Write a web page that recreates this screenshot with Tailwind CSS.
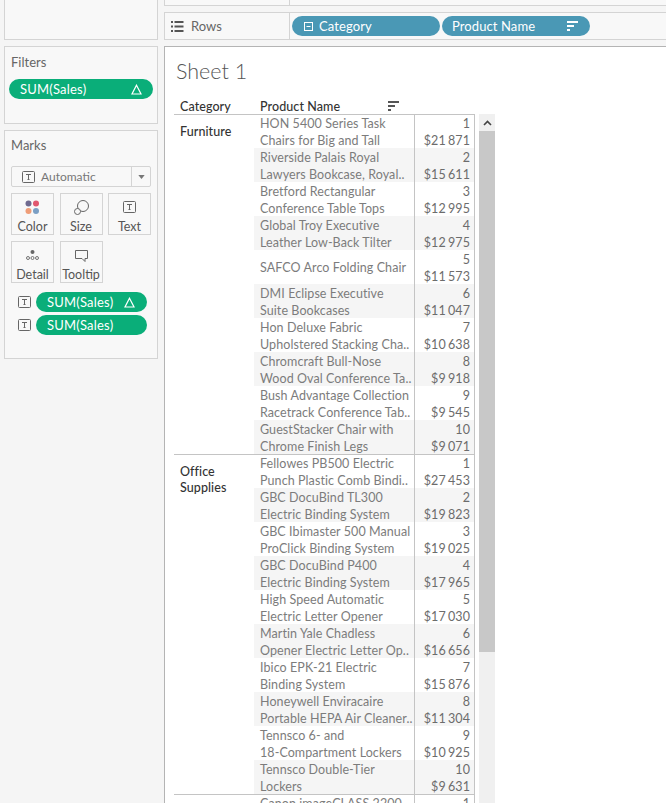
<!DOCTYPE html>
<html>
<head>
<meta charset="utf-8">
<script src="https://cdn.jsdelivr.net/npm/@tailwindcss/browser@4"></script>
</head>
<body class="bg-white">
<div class="flex h-[803px] w-[666px] overflow-hidden bg-white font-['Lato','Liberation_Sans',sans-serif] text-[12px] text-[#555]">
  <!-- Sidebar -->
  <aside class="flex h-full w-[164px] shrink-0 flex-col bg-[#f5f5f5] pl-[4px]">
    <div class="h-[40px] w-[154px] border border-t-0 border-[#d4d4d4] bg-[#f8f8f8]"></div>
    <section class="mt-[6px] h-[78px] w-[154px] border border-[#d4d4d4] bg-[#f8f8f8] px-[4px]">
      <h2 class="pl-[2px] pt-[7px] text-[13px] leading-[17px] text-[#666]">Filters</h2>
      <div class="mt-[8px] flex h-[20px] items-center justify-between rounded-full bg-[#0aae79] pl-[11px] pr-[11px] text-[13px] tracking-[.2px] text-white">
        <span class="pt-px">SUM(Sales)</span>
        <svg width="11" height="11" viewBox="0 0 11 11" fill="none" stroke="#fff" stroke-width="1.2"><path d="M5.5 1.2 10 10H1Z"/></svg>
      </div>
    </section>
    <section class="mt-[6px] h-[229px] w-[154px] border border-[#d4d4d4] bg-[#f8f8f8] pl-[6px]">
      <h2 class="pt-[6px] text-[13px] leading-[17px] text-[#666]">Marks</h2>
      <div class="mt-[12px] flex h-[21px] w-[140px] items-center rounded-[2px] border border-[#d4d4d4] bg-[#f8f8f8]">
        <div class="flex flex-1 items-center pl-[10px]">
          <svg width="13" height="12" viewBox="0 0 13 12" fill="none"><rect x=".5" y=".5" width="12" height="11" rx="1" stroke="#666"/><path d="M4 3.5h5M6.5 3.5v5M5.5 8.5h2" stroke="#666"/></svg>
          <span class="ml-[6px] text-[12px] text-[#777]">Automatic</span>
        </div>
        <div class="flex h-full w-[19px] items-center justify-center border-l border-[#d4d4d4]">
          <svg width="7" height="4" viewBox="0 0 8 5"><path d="M0 0h8L4 5Z" fill="#777"/></svg>
        </div>
      </div>
      <div class="mt-[6px] grid w-[140px] grid-cols-[43px_43px_43px] gap-x-[5.5px] gap-y-[6px] text-[12.5px]">
        <div class="flex h-[42px] flex-col items-center border border-[#d4d4d4]">
          <svg class="mt-[6px]" width="15" height="15" viewBox="0 0 15 15"><circle cx="3.5" cy="3.5" r="3" fill="#6f6a8f"/><circle cx="11" cy="3.5" r="3" fill="#e0576f"/><circle cx="3.5" cy="11" r="3" fill="#ef9d78"/><circle cx="11" cy="11" r="3" fill="#7b9fc4"/></svg>
          <span class="mt-[4px] leading-[15px]">Color</span>
        </div>
        <div class="flex h-[42px] flex-col items-center border border-[#d4d4d4]">
          <svg class="mt-[6px]" width="15" height="15" viewBox="0 0 15 15" fill="none" stroke="#666"><circle cx="9" cy="6" r="5.5"/><circle cx="3.5" cy="11.5" r="3" fill="#f8f8f8"/></svg>
          <span class="mt-[4px] leading-[15px]">Size</span>
        </div>
        <div class="flex h-[42px] flex-col items-center border border-[#d4d4d4]">
          <svg class="mt-[7px]" width="13" height="12" viewBox="0 0 13 12" fill="none"><rect x=".5" y=".5" width="12" height="11" rx="1" stroke="#666"/><path d="M4 3.5h5M6.5 3.5v5M5.5 8.5h2" stroke="#666"/></svg>
          <span class="mt-[6px] leading-[15px]">Text</span>
        </div>
        <div class="flex h-[42px] flex-col items-center border border-[#d4d4d4]">
          <svg class="mt-[8px]" width="13" height="10" viewBox="0 0 13 10" fill="none" stroke="#666" stroke-width=".9"><circle cx="6.5" cy="2" r="2" fill="#666" stroke="none"/><circle cx="2" cy="8" r="1.5"/><circle cx="6.5" cy="8" r="1.5"/><circle cx="11" cy="8" r="1.5"/></svg>
          <span class="mt-[7px] leading-[15px]">Detail</span>
        </div>
        <div class="flex h-[42px] flex-col items-center border border-[#d4d4d4]">
          <svg class="mt-[7px]" width="14" height="14" viewBox="0 0 14 14" fill="none" stroke="#666"><path d="M1.5 1.5h12v8H11v3l-3-3H1.5Z"/></svg>
          <span class="mt-[4px] whitespace-nowrap leading-[15px]">Tooltip</span>
        </div>
      </div>
      <div class="mt-[9px] flex h-[20px] w-[140px] items-center">
        <svg class="ml-[7px]" width="13" height="12" viewBox="0 0 13 12" fill="none"><rect x=".5" y=".5" width="12" height="11" rx="1" stroke="#666"/><path d="M4 3.5h5M6.5 3.5v5M5.5 8.5h2" stroke="#666"/></svg>
        <div class="ml-[5px] flex h-[20px] w-[111px] items-center justify-between rounded-full bg-[#0aae79] pl-[11px] pr-[12px] text-[13px] tracking-[.2px] text-white">
          <span class="pt-px">SUM(Sales)</span>
          <svg width="11" height="11" viewBox="0 0 11 11" fill="none" stroke="#fff" stroke-width="1.2"><path d="M5.5 1.2 10 10H1Z"/></svg>
        </div>
      </div>
      <div class="mt-[3px] flex h-[20px] w-[140px] items-center">
        <svg class="ml-[7px]" width="13" height="12" viewBox="0 0 13 12" fill="none"><rect x=".5" y=".5" width="12" height="11" rx="1" stroke="#666"/><path d="M4 3.5h5M6.5 3.5v5M5.5 8.5h2" stroke="#666"/></svg>
        <div class="ml-[5px] flex h-[20px] w-[111px] items-center rounded-full bg-[#0aae79] pl-[11px] text-[13px] tracking-[.2px] text-white"><span class="pt-px">SUM(Sales)</span></div>
      </div>
    </section>
  </aside>

  <!-- Main -->
  <main class="flex h-full min-w-0 flex-1 flex-col bg-[#f5f5f5]">
    <div class="flex h-[6px] border-b border-l border-[#d4d4d4] bg-[#f8f8f8]">
      <div class="w-[125px] border-r border-[#d4d4d4]"></div>
    </div>
    <div class="mt-[6px] flex h-[28px] items-center border-y border-l border-[#d4d4d4] bg-[#f8f8f8]">
      <div class="flex h-full w-[125px] items-center border-r border-[#d4d4d4] pl-[6px]">
        <svg width="13" height="11" viewBox="0 0 13 11" fill="#555"><rect width="2" height="2"/><rect y="4.5" width="2" height="2"/><rect y="9" width="2" height="2"/><rect x="3.5" width="9" height="2"/><rect x="3.5" y="4.5" width="9" height="2"/><rect x="3.5" y="9" width="9" height="2"/></svg>
        <span class="ml-[7px] pt-px text-[13px] text-[#666]">Rows</span>
      </div>
      <div class="ml-[2px] flex h-[20px] w-[148px] items-center rounded-full bg-[#4a98b5] pl-[12px] text-[13px] tracking-[.1px] text-white">
        <svg width="9" height="9" viewBox="0 0 9 9" fill="none" stroke="#fff"><rect x=".5" y=".5" width="8" height="8"/><path d="M2.5 4.5h4"/></svg>
        <span class="ml-[6px] pt-px">Category</span>
      </div>
      <div class="ml-[2px] flex h-[20px] w-[148px] items-center justify-between rounded-full bg-[#4a98b5] pl-[10px] pr-[12px] text-[13px] tracking-[.1px] text-white">
        <span class="pt-px">Product Name</span>
        <svg width="11" height="10" viewBox="0 0 11 10" fill="#fff"><rect width="11" height="2"/><rect y="4" width="7" height="2"/><rect y="8" width="3" height="2"/></svg>
      </div>
    </div>
    <div class="mt-[6px] flex min-h-0 flex-1 flex-col overflow-hidden border-t border-l border-[#b4b4b4] bg-white pl-[9px] text-[12.5px] tracking-[.08px]">
      <h1 class="flex h-[50px] shrink-0 items-center pb-px pl-[2px] text-[21.5px] font-light tracking-normal text-[#555]">Sheet 1</h1>
      <div class="flex">
        <div class="w-[301px] shrink-0">
          <div class="flex h-[17px] items-center font-medium leading-[17px] text-[#333]">
            <div class="w-[80px] pl-[6px] pt-[2px]">Category</div>
            <div class="flex w-[161px] items-center pl-[6px]"><span class="pt-[2px]">Product Name</span>
              <svg class="ml-[48px]" width="11" height="10" viewBox="0 0 11 10" fill="#555"><rect width="11" height="2"/><rect y="4" width="7" height="2"/><rect y="8" width="3" height="2"/></svg>
            </div>
          </div>

          <div class="flex border-t border-[#c4c4c4]">
            <div class="w-[80px] shrink-0 pl-[6px] pt-[9px] font-medium leading-[16px] text-[#333]">Furniture</div>
            <div class="-mt-px w-[221px] shrink-0 leading-[17px] text-[#7c7c7c] [&>div>div]:pt-px [&>div>div:last-child]:pr-[4px] [&>div>div:last-child]:[word-spacing:-1px]">
              <div class="flex h-[34px]"><div class="w-[161px] overflow-hidden whitespace-nowrap border-r border-[#c4c4c4] pl-[6px]">HON 5400 Series Task<br>Chairs for Big and Tall</div><div class="w-[60px] border-r border-[#c4c4c4] text-right text-[#6c6c6c]">1<br>$21&nbsp;871</div></div>
              <div class="flex h-[34px] bg-[#f5f5f5]"><div class="w-[161px] overflow-hidden whitespace-nowrap border-r border-[#c4c4c4] pl-[6px]">Riverside Palais Royal<br>Lawyers Bookcase, Royal..</div><div class="w-[60px] border-r border-[#c4c4c4] text-right text-[#6c6c6c]">2<br>$15&nbsp;611</div></div>
              <div class="flex h-[34px]"><div class="w-[161px] overflow-hidden whitespace-nowrap border-r border-[#c4c4c4] pl-[6px]">Bretford Rectangular<br>Conference Table Tops</div><div class="w-[60px] border-r border-[#c4c4c4] text-right text-[#6c6c6c]">3<br>$12&nbsp;995</div></div>
              <div class="flex h-[34px] bg-[#f5f5f5]"><div class="w-[161px] overflow-hidden whitespace-nowrap border-r border-[#c4c4c4] pl-[6px]">Global Troy Executive<br>Leather Low-Back Tilter</div><div class="w-[60px] border-r border-[#c4c4c4] text-right text-[#6c6c6c]">4<br>$12&nbsp;975</div></div>
              <div class="flex h-[34px]"><div class="flex w-[161px] items-center overflow-hidden whitespace-nowrap border-r border-[#c4c4c4] pl-[6px]">SAFCO Arco Folding Chair</div><div class="w-[60px] border-r border-[#c4c4c4] text-right text-[#6c6c6c]">5<br>$11&nbsp;573</div></div>
              <div class="flex h-[34px] bg-[#f5f5f5]"><div class="w-[161px] overflow-hidden whitespace-nowrap border-r border-[#c4c4c4] pl-[6px]">DMI Eclipse Executive<br>Suite Bookcases</div><div class="w-[60px] border-r border-[#c4c4c4] text-right text-[#6c6c6c]">6<br>$11&nbsp;047</div></div>
              <div class="flex h-[34px]"><div class="w-[161px] overflow-hidden whitespace-nowrap border-r border-[#c4c4c4] pl-[6px]">Hon Deluxe Fabric<br>Upholstered Stacking Cha..</div><div class="w-[60px] border-r border-[#c4c4c4] text-right text-[#6c6c6c]">7<br>$10&nbsp;638</div></div>
              <div class="flex h-[34px] bg-[#f5f5f5]"><div class="w-[161px] overflow-hidden whitespace-nowrap border-r border-[#c4c4c4] pl-[6px]">Chromcraft Bull-Nose<br>Wood Oval Conference Ta..</div><div class="w-[60px] border-r border-[#c4c4c4] text-right text-[#6c6c6c]">8<br>$9&nbsp;918</div></div>
              <div class="flex h-[34px]"><div class="w-[161px] overflow-hidden whitespace-nowrap border-r border-[#c4c4c4] pl-[6px]">Bush Advantage Collection<br>Racetrack Conference Tab..</div><div class="w-[60px] border-r border-[#c4c4c4] text-right text-[#6c6c6c]">9<br>$9&nbsp;545</div></div>
              <div class="flex h-[34px] bg-[#f5f5f5]"><div class="w-[161px] overflow-hidden whitespace-nowrap border-r border-[#c4c4c4] pl-[6px]">GuestStacker Chair with<br>Chrome Finish Legs</div><div class="w-[60px] border-r border-[#c4c4c4] text-right text-[#6c6c6c]">10<br>$9&nbsp;071</div></div>
            </div>
          </div>

          <div class="flex border-t border-[#c4c4c4]">
            <div class="w-[80px] shrink-0 pl-[6px] pt-[9px] font-medium leading-[16px] text-[#333]">Office<br>Supplies</div>
            <div class="-mt-px w-[221px] shrink-0 leading-[17px] text-[#7c7c7c] [&>div>div]:pt-px [&>div>div:last-child]:pr-[4px] [&>div>div:last-child]:[word-spacing:-1px]">
              <div class="flex h-[34px]"><div class="w-[161px] overflow-hidden whitespace-nowrap border-r border-[#c4c4c4] pl-[6px]">Fellowes PB500 Electric<br>Punch Plastic Comb Bindi..</div><div class="w-[60px] border-r border-[#c4c4c4] text-right text-[#6c6c6c]">1<br>$27&nbsp;453</div></div>
              <div class="flex h-[34px] bg-[#f5f5f5]"><div class="w-[161px] overflow-hidden whitespace-nowrap border-r border-[#c4c4c4] pl-[6px]">GBC DocuBind TL300<br>Electric Binding System</div><div class="w-[60px] border-r border-[#c4c4c4] text-right text-[#6c6c6c]">2<br>$19&nbsp;823</div></div>
              <div class="flex h-[34px]"><div class="w-[161px] overflow-hidden whitespace-nowrap border-r border-[#c4c4c4] pl-[6px]">GBC Ibimaster 500 Manual<br>ProClick Binding System</div><div class="w-[60px] border-r border-[#c4c4c4] text-right text-[#6c6c6c]">3<br>$19&nbsp;025</div></div>
              <div class="flex h-[34px] bg-[#f5f5f5]"><div class="w-[161px] overflow-hidden whitespace-nowrap border-r border-[#c4c4c4] pl-[6px]">GBC DocuBind P400<br>Electric Binding System</div><div class="w-[60px] border-r border-[#c4c4c4] text-right text-[#6c6c6c]">4<br>$17&nbsp;965</div></div>
              <div class="flex h-[34px]"><div class="w-[161px] overflow-hidden whitespace-nowrap border-r border-[#c4c4c4] pl-[6px]">High Speed Automatic<br>Electric Letter Opener</div><div class="w-[60px] border-r border-[#c4c4c4] text-right text-[#6c6c6c]">5<br>$17&nbsp;030</div></div>
              <div class="flex h-[34px] bg-[#f5f5f5]"><div class="w-[161px] overflow-hidden whitespace-nowrap border-r border-[#c4c4c4] pl-[6px]">Martin Yale Chadless<br>Opener Electric Letter Op..</div><div class="w-[60px] border-r border-[#c4c4c4] text-right text-[#6c6c6c]">6<br>$16&nbsp;656</div></div>
              <div class="flex h-[34px]"><div class="w-[161px] overflow-hidden whitespace-nowrap border-r border-[#c4c4c4] pl-[6px]">Ibico EPK-21 Electric<br>Binding System</div><div class="w-[60px] border-r border-[#c4c4c4] text-right text-[#6c6c6c]">7<br>$15&nbsp;876</div></div>
              <div class="flex h-[34px] bg-[#f5f5f5]"><div class="w-[161px] overflow-hidden whitespace-nowrap border-r border-[#c4c4c4] pl-[6px]">Honeywell Enviracaire<br>Portable HEPA Air Cleaner..</div><div class="w-[60px] border-r border-[#c4c4c4] text-right text-[#6c6c6c]">8<br>$11&nbsp;304</div></div>
              <div class="flex h-[34px]"><div class="w-[161px] overflow-hidden whitespace-nowrap border-r border-[#c4c4c4] pl-[6px]">Tennsco 6- and<br>18-Compartment Lockers</div><div class="w-[60px] border-r border-[#c4c4c4] text-right text-[#6c6c6c]">9<br>$10&nbsp;925</div></div>
              <div class="flex h-[34px] bg-[#f5f5f5]"><div class="w-[161px] overflow-hidden whitespace-nowrap border-r border-[#c4c4c4] pl-[6px]">Tennsco Double-Tier<br>Lockers</div><div class="w-[60px] border-r border-[#c4c4c4] text-right text-[#6c6c6c]">10<br>$9&nbsp;631</div></div>
            </div>
          </div>

          <div class="flex border-t border-[#c4c4c4]">
            <div class="w-[80px] shrink-0"></div>
            <div class="-mt-px w-[221px] shrink-0 leading-[17px] text-[#7c7c7c] [&>div>div]:pt-px [&>div>div:last-child]:pr-[4px]">
              <div class="flex h-[34px]"><div class="w-[161px] overflow-hidden whitespace-nowrap border-r border-[#c4c4c4] pl-[6px]">Canon imageCLASS 2200</div><div class="w-[60px] border-r border-[#c4c4c4] text-right text-[#6c6c6c]">1</div></div>
            </div>
          </div>
        </div>

        <!-- Scrollbar -->
        <div class="ml-[4px] mt-[17px] flex w-[16px] shrink-0 flex-col bg-[#f0f0f0]">
          <div class="flex h-[17px] items-center justify-center">
            <svg width="9" height="6" viewBox="0 0 9 6" fill="none" stroke="#444" stroke-width="1.6"><path d="M1 5 4.5 1.5 8 5"/></svg>
          </div>
          <div class="h-[521px] bg-[#c8c8c8]"></div>
          <div class="h-[200px]"></div>
        </div>
      </div>
    </div>
  </main>
</div>
</body>
</html>
